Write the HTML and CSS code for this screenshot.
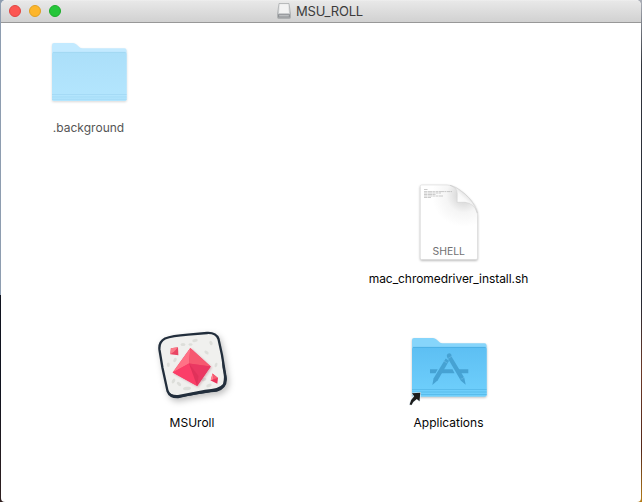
FILE: index.html
```
<!DOCTYPE html>
<html lang="en">
<head>
<meta charset="utf-8">
<title>MSU_ROLL</title>
<link rel="stylesheet" href="styles.css">
</head>
<body>
<main class="window">
  <header class="titlebar">
    <div class="controls"><i class="dot red"></i><i class="dot yellow"></i><i class="dot green"></i></div>
    <div class="title">
      <svg class="drive" width="14" height="16" viewBox="0 0 14 16">
        <defs><linearGradient id="drv" x1="0" y1="0" x2="0" y2="1"><stop offset="0" stop-color="#ededed"/><stop offset="1" stop-color="#b9bcbe"/></linearGradient></defs>
        <path d="M2 .5H12L13.5 11V14.5Q13.5 15.5 12.5 15.5H1.5Q.5 15.5 .5 14.5V11Z" fill="url(#drv)" stroke="#a4a6a8" stroke-width=".7"/>
        <path d="M3 1.5H11L12 10H2Z" fill="#f3f3f3"/>
        <path d="M1 11.2H13V14.6H1Z" fill="#8f9295"/>
        <path d="M2.2 12.2H11.8V13.4H2.2Z" fill="#c6c8ca"/>
      </svg>
      <span class="title-text">MSU_ROLL</span>
    </div>
  </header>
  <section class="canvas">
    <figure class="item background">
      <svg class="icon" width="90" height="80" viewBox="43 32 90 80">
        <defs><linearGradient id="bg1" x1="0" y1="0" x2="0" y2="1"><stop offset="0" stop-color="#abdff9"/><stop offset="1" stop-color="#b4e6fe"/></linearGradient></defs>
        <g class="folder-shadow pale">
          <path d="M52 99V45Q52 43 54 43H73Q75 43 76.500 44.500L79.500 47.300Q80.500 48.300 82.500 48.300H124.500Q126.600 48.300 126.600 50.400V99Q126.600 101 124.600 101H54Q52 101 52 99Z" fill="#c3eaff"/>
          <path d="M52 54Q52 52 54 52H124.600Q126.600 52 126.600 54V99Q126.600 101 124.600 101H54Q52 101 52 99Z" fill="url(#bg1)"/>
        </g>
        <path d="M53 52.400H125.600" stroke="#9fd5f1" stroke-width=".8"/>
        <path d="M52 94.500H126.600M52 97H126.600M52 99.300H126.600" stroke="#9fd6f2" stroke-width=".7"/>
      </svg>
      <figcaption>.background</figcaption>
    </figure>

    <figure class="item script">
      <svg class="icon" width="76" height="86" viewBox="411 179 76 86">
        <defs>
          <radialGradient id="paper" gradientUnits="userSpaceOnUse" cx="464" cy="195" r="32"><stop offset="0" stop-color="#c8c8c8"/><stop offset=".25" stop-color="#dedede"/><stop offset=".55" stop-color="#f5f5f5"/><stop offset="1" stop-color="#fff"/></radialGradient>
          <linearGradient id="curl" gradientUnits="userSpaceOnUse" x1="457" y1="203" x2="466" y2="193"><stop offset="0" stop-color="#fff"/><stop offset=".6" stop-color="#f8f8f8"/><stop offset="1" stop-color="#dedede"/></linearGradient>
        </defs>
        <path class="page-shadow" d="M421.500 185H447Q455 185 465.500 194.500Q477.500 205.500 477.500 215V258Q477.500 259.500 476 259.500H421.500Q420.300 259.500 420.300 258V186.500Q420.300 185 421.500 185Z" fill="url(#paper)" stroke="#d6d6d6" stroke-width=".5"/>
        <path d="M450 185.300Q457 187.500 457.200 193V202.300H465Q474 203 477.300 213Q474 202 465.500 194.500Q457 187 450 185.300Z" fill="url(#curl)" stroke="#c6c6c6" stroke-width=".4"/>
        <g stroke="#a8a8a8" stroke-width=".6" stroke-dasharray="3 .5 5 .4 2 .6"><path d="M424 189.500H428M424 191.600H452M424 193H441M424 194.500H436M424 196H443M424 197.500H431"/></g>
        <text x="432.500" y="255" textLength="32.500" lengthAdjust="spacingAndGlyphs" class="file-type">SHELL</text>
      </svg>
      <figcaption>mac_chromedriver_install.sh</figcaption>
    </figure>

    <figure class="item roll">
      <svg class="icon" width="96" height="90" viewBox="145 320 96 90">
        <path class="roll-shadow" d="M165 338.500Q172 336 188 334.700L207 333Q216 332.500 218.500 339L222 355L225.700 378Q226.500 387 217 390.500Q205 391.500 190 394.500L178 397.200Q170 397.500 167.500 391L162.500 368L159.500 350Q158.500 342 165 338.500Z" fill="#f0f0ee" stroke="#222e3c" stroke-width="2.300" stroke-linejoin="round"/>
        <path d="M221.500 352L226.300 376Q227.500 388 217 391L190 395.500L177 398Q170 397 168 391Q171 395.500 178 395L205 389.700Q219 389 223 384Q225 377 222.500 368Z" fill="#222e3c"/>
        <g fill="#dddeda">
          <ellipse cx="183" cy="344.500" rx="2.500" ry="1.500"/><ellipse cx="195" cy="340.500" rx="2.800" ry="1.500" transform="rotate(-12 195 340.500)"/><ellipse cx="190.500" cy="344.500" rx="2" ry="1.300"/>
          <ellipse cx="211" cy="343" rx="1.500" ry="2.300" transform="rotate(-25 211 343)"/><ellipse cx="206.500" cy="352.500" rx="2.400" ry="1.400" transform="rotate(35 206.500 352.500)"/>
          <ellipse cx="168.300" cy="364.700" rx="1.500" ry="2.300"/><ellipse cx="173.500" cy="381" rx="2.600" ry="1.500" transform="rotate(-60 173.500 381)"/><ellipse cx="179" cy="384" rx="2.600" ry="1.500" transform="rotate(40 179 384)"/>
          <ellipse cx="187" cy="388.500" rx="4" ry="1.700" transform="rotate(-8 187 388.500)"/><ellipse cx="204" cy="379.500" rx="2.500" ry="1.600" transform="rotate(-20 204 379.500)"/><ellipse cx="209" cy="385.500" rx="2.800" ry="1.600" transform="rotate(-20 209 385.500)"/>
          <ellipse cx="216" cy="365" rx="1.300" ry="2.300" transform="rotate(20 216 365)"/><ellipse cx="175" cy="360" rx="1.500" ry="2.300" transform="rotate(30 175 360)"/>
        </g>
        <g class="gem-shadow">
          <path d="M190.300 348L210.700 366.500L197.200 386L172.700 372.500Z" fill="#ef3b62"/>
          <path d="M190.300 348L189 363.500L172.700 372.500Z" fill="#ff7286"/>
          <path d="M190.300 348L210.700 366.500L189 363.500Z" fill="#f65970"/>
          <path d="M189 363.500L210.700 366.500L197.200 386Z" fill="#ea3862"/>
          <path d="M189 363.500L197.200 386L172.700 372.500Z" fill="#fb3e68"/>
          <path d="M189 363.500L197.200 386L198.500 376Z" fill="#cf244e" opacity=".35"/>
        </g>
        <path d="M170.900 348.200L178 347.300L178.400 355.300L170.300 354.300Z" fill="#e94563"/>
        <path d="M170.900 348.200L178 347.300L174.200 351.500L170.300 354.300Z" fill="#fa7b89"/>
        <path d="M212.500 373.500L218 378L217.300 383.800L210.700 380.500Z" fill="#eb345b"/>
        <path d="M212.500 373.500L213.700 379L210.700 380.500Z" fill="#ff8290"/><path d="M212.500 373.500L218 378L213.700 379Z" fill="#f65f73"/>
      </svg>
      <figcaption>MSUroll</figcaption>
    </figure>

    <figure class="item applications">
      <svg class="icon" width="92" height="84" viewBox="403 328 92 84">
        <defs><linearGradient id="app1" x1="0" y1="0" x2="0" y2="1"><stop offset="0" stop-color="#5dbff3"/><stop offset="1" stop-color="#70d0fc"/></linearGradient></defs>
        <g class="folder-shadow">
          <path d="M412 395V340Q412 338 414 338H433Q435 338 436.500 339.500L439.500 342.300Q440.500 343.300 442.500 343.300H484.500Q486.600 343.300 486.600 345.400V395Q486.600 396.500 484.600 396.500H414Q412 396.500 412 395Z" fill="#86d5fb"/>
          <path d="M412 349Q412 347 414 347H484.600Q486.600 347 486.600 349V394.500Q486.600 396.500 484.600 396.500H414Q412 396.500 412 394.500Z" fill="url(#app1)"/>
        </g>
        <path d="M413 347.400H485.600" stroke="#48acdf" stroke-width=".8"/>
        <path d="M412 389.500H486.600M412 392H486.600M412 394.500H486.600" stroke="#51b4e5" stroke-width=".7"/>
        <g fill="#46a2d3">
          <path d="M430 369.200H437.700L435.500 373.200H430ZM442.200 369.200H452.500L454.600 373.200H440ZM457.700 369.200H468.300V373.200H460Z"/>
          <path d="M445.700 358.500L449.100 360.700L437.800 380.200L432.300 385.100L433.500 378.400Z"/>
          <path d="M446.800 355.100Q448 352.600 450.300 353.400Q452 354.400 451.500 356.500L464.300 377.800L465.700 384.700L460.900 380.800L447 357Z"/>
        </g>
        <path d="M443.500 360.800L447.700 363.300M447.700 358.700L452.200 356M460.500 379Q463.500 379.500 463.800 377" stroke="#65b9e6" stroke-width=".7" fill="none"/>
        <path d="M411.900 393.300L420.300 392.800L419.500 401.300L416.800 398.900Q413 401.300 411.500 405L409.600 404.600Q410.500 399.500 414.200 396.200Z" fill="#1c1c1c" stroke="#e8f1f6" stroke-width="1.200" stroke-linejoin="round" paint-order="stroke"/>
      </svg>
      <figcaption>Applications</figcaption>
    </figure>
  </section>
</main>
</body>
</html>
```

FILE: styles.css
```
* { box-sizing: border-box; }
html, body { height: 100%; }
body {
  margin: 0;
  padding: 0 1px;
  overflow: hidden;
  font-family: Inter, "Liberation Sans", sans-serif;
  background:
    linear-gradient(#8e9db0 0 295px, #10131f 295px 390px, #302020 502px) left / 50% 100% no-repeat,
    linear-gradient(#aaaeb7 0, #30343c 65px, #252832 300px, #6b3928 370px, #542718 450px, #b57d19 502px) right / 50% 100% no-repeat;
}
.window {
  display: flex;
  flex-direction: column;
  width: 640px;
  height: 502px;
  overflow: hidden;
  border-radius: 5px 5px 4px 4px;
  background: #fff;
}
.titlebar {
  display: grid;
  grid-template-columns: 100px 1fr 100px;
  flex: 0 0 23px;
  align-items: center;
  border-bottom: 1px solid #989898;
  background: linear-gradient(#f1f1f1 0, #e8e8e8 1px, #d1d1d1 22px);
}
.controls { display: flex; gap: 8px; padding-left: 8px; }
.dot { width: 12px; height: 12px; border-radius: 50%; }
.red { background: #fc5652; border: .6px solid #df4542; }
.yellow { background: #fdb62c; border: .6px solid #dfa023; }
.green { background: #25c63a; border: .6px solid #1dac2b; }
.title { display: flex; justify-content: center; gap: 5px; align-items: center; padding-right: 2px; color: #3c3c3c; }
.drive { display: block; }
.title-text { font-size: 13px; line-height: 20px; letter-spacing: -.2px; }
.canvas { position: relative; flex: 1; }
.item {
  position: absolute;
  display: flex;
  flex-direction: column;
  align-items: center;
  width: 180px;
  margin: 0;
}
.background { left: -3px; top: 9px; color: #555; }
.script { left: 358px; top: 156px; }
.roll { left: 102px; top: 297px; }
.applications { left: 358px; top: 305px; }
.icon { display: block; }
figcaption { font-size: 12px; line-height: 16px; white-space: nowrap; }
.background figcaption { margin-top: 8px; padding-left: 1px; letter-spacing: .02px; }
.script figcaption { margin-top: 6px; padding-right: 1px; letter-spacing: -.06px; }
.roll figcaption { margin-top: 5px; padding-right: 2px; }
.applications figcaption { margin-top: 3px; padding-right: 1px; }
.roll, .script, .applications { color: #050505; }
.file-type { font: 10.500px Inter, sans-serif; fill: #727272; }
.folder-shadow { filter: drop-shadow(0 1px 1px rgba(0, 0, 0, .25)); }
.pale { filter: drop-shadow(0 1px 1px rgba(0, 0, 0, .15)); }
.page-shadow { filter: drop-shadow(0 1px 1px rgba(0, 0, 0, .3)); }
.roll-shadow { filter: drop-shadow(2px 3px 3px rgba(0, 0, 0, .25)); }
.gem-shadow { filter: drop-shadow(1px 1px 1px rgba(140, 0, 30, .25)); }
```
